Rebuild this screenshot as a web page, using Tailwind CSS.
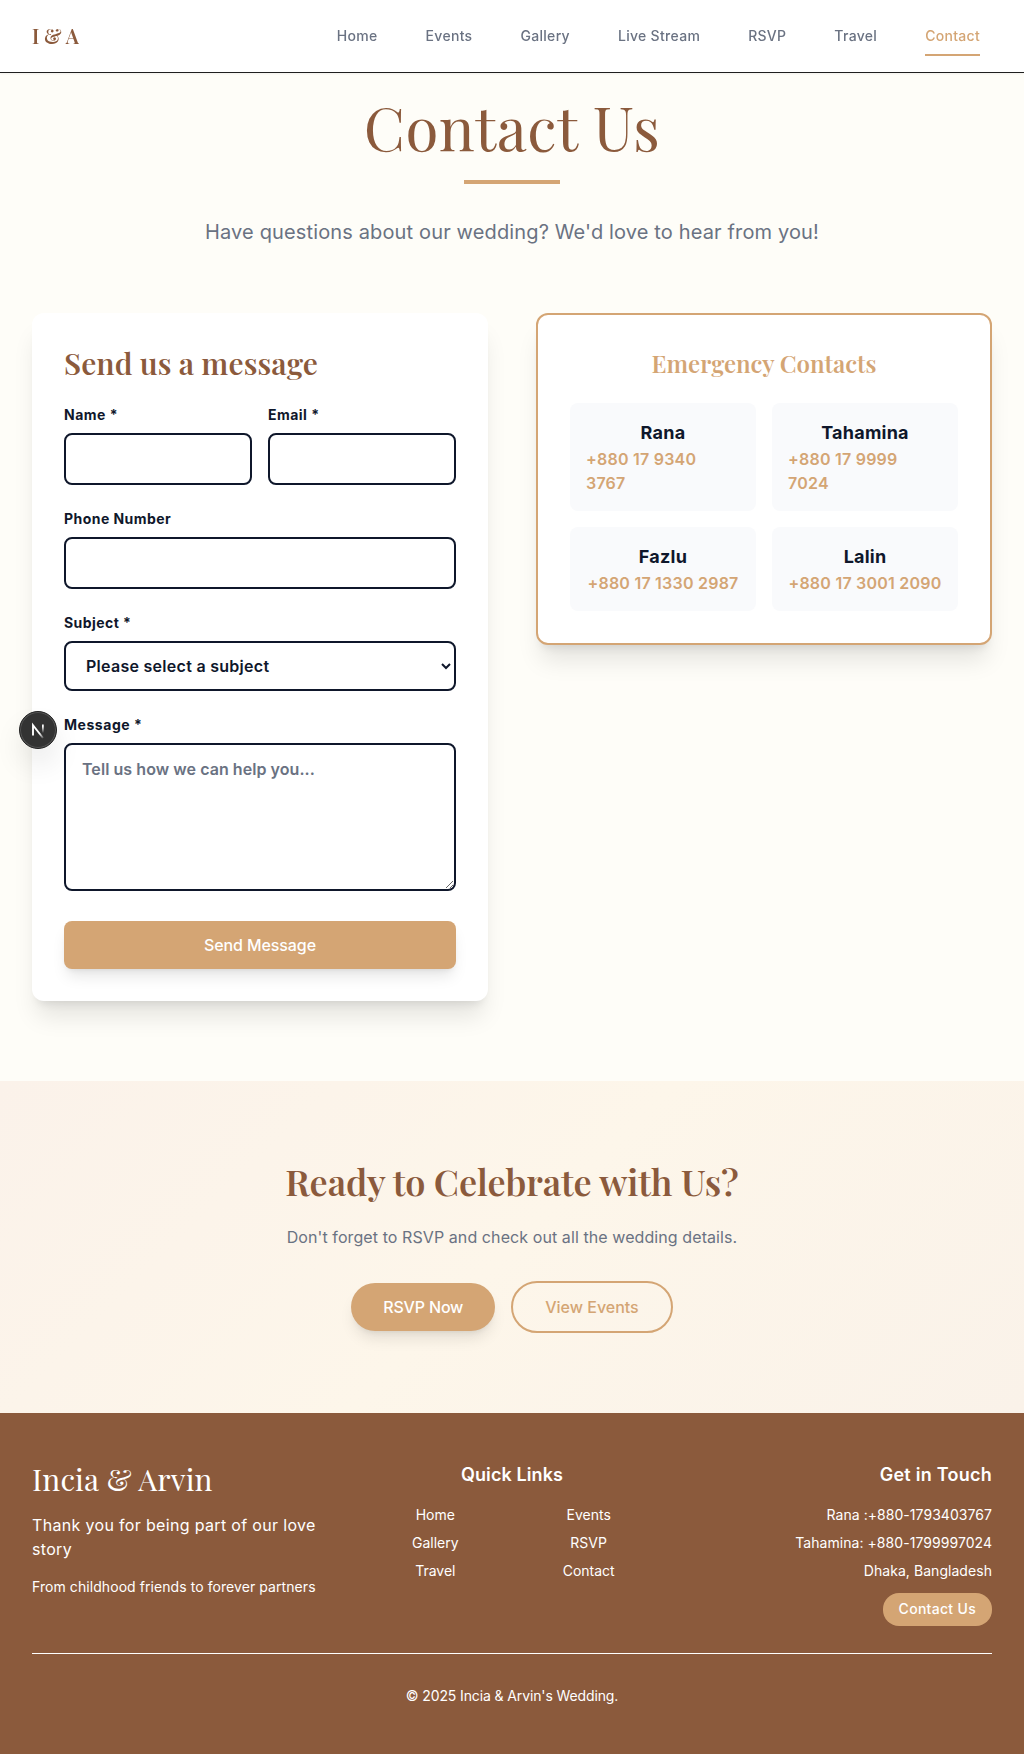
<!DOCTYPE html>
<html lang="en">
<head>
<meta charset="utf-8">
<title>Contact Us</title>
<script src="https://cdn.jsdelivr.net/npm/@tailwindcss/browser@4"></script>
</head>
<body class="bg-[#fefdf8] font-['Inter',sans-serif] text-slate-900">
<header class="fixed inset-x-0 top-0 z-10 flex h-[73px] items-center justify-between border-b border-[#1f1f1f] bg-white px-8 shadow-[0_1px_2px_rgba(0,0,0,0.05)]">
  <a class="font-['Playfair_Display','Liberation_Serif',serif] text-xl font-semibold text-[#8b5a3c]">I &amp; A</a>
  <nav class="mr-3 flex gap-12 text-sm font-medium tracking-[0.3px] text-gray-500">
    <a>Home</a><a>Events</a><a>Gallery</a><a>Live Stream</a><a>RSVP</a><a>Travel</a>
    <a class="relative text-[#d4a574]">Contact<span class="absolute inset-x-0 -bottom-2.5 h-0.5 bg-[#d4a574]"></span></a>
  </nav>
</header>

<main>
  <section class="flex flex-col items-center pt-24">
    <h1 class="h-16 font-['Playfair_Display','Liberation_Serif',serif] text-[60px] leading-[60px] tracking-[0.5px] text-[#8b5a3c]">Contact Us</h1>
    <div class="mt-5 h-1 w-24 bg-[#d4a574]"></div>
    <p class="mt-8 text-xl leading-8 tracking-[0.14px] text-gray-500">Have questions about our wedding? We'd love to hear from you!</p>
  </section>

  <section class="mt-[65px] grid grid-cols-2 items-start gap-12 px-8 pb-20">
    <form class="rounded-xl bg-white p-8 shadow-xl">
      <h2 class="mb-6 font-['Playfair_Display','Liberation_Serif',serif] text-3xl leading-9 font-semibold tracking-[0.1px] text-[#8b5a3c]">Send us a message</h2>
      <div class="flex flex-col gap-6 font-semibold">
        <div class="grid grid-cols-2 gap-4">
          <div><label class="mb-2 block text-sm font-bold tracking-[0.48px]">Name *</label><input class="block h-[52px] w-full rounded-lg border-2 border-slate-900 px-4"></div>
          <div><label class="mb-2 block text-sm font-bold tracking-[0.48px]">Email *</label><input class="block h-[52px] w-full rounded-lg border-2 border-slate-900 px-4"></div>
        </div>
        <div><label class="mb-2 block text-sm font-bold tracking-[0.45px]">Phone Number</label><input class="block h-[52px] w-full rounded-lg border-2 border-slate-900 px-4"></div>
        <div><label class="mb-2 block text-sm font-bold tracking-[0.45px]">Subject *</label><select class="block h-[50px] w-full rounded-lg border-2 border-slate-900 bg-white px-4 tracking-[0.28px]"><option>Please select a subject</option></select></div>
        <div><label class="mb-2 block text-sm font-bold tracking-[0.55px]">Message *</label><textarea class="mb-1.5 block h-[148px] w-full rounded-lg border-2 border-slate-900 px-4 py-3 tracking-[0.06px] placeholder:text-gray-500" placeholder="Tell us how we can help you..."></textarea></div>
        <button type="button" class="h-12 rounded-lg bg-[#d4a574] font-medium tracking-[-0.1px] text-white shadow-lg">Send Message</button>
      </div>
    </form>

    <div class="rounded-xl border-2 border-[#d4a574] bg-white p-8 shadow-xl">
      <h3 class="mb-6 text-center font-['Playfair_Display','Liberation_Serif',serif] text-2xl leading-8 font-semibold text-[#d4a574]">Emergency Contacts</h3>
      <div class="grid grid-cols-2 gap-4 font-semibold tracking-[0.23px] text-[#d4a574]">
        <div class="flex flex-col items-center rounded-lg bg-[#f9fafc] p-4"><h4 class="text-lg font-bold text-slate-900">Rana</h4><a class="w-full">+880 17 9340<br>3767</a></div>
        <div class="flex flex-col items-center rounded-lg bg-[#f9fafc] p-4"><h4 class="text-lg font-bold text-slate-900">Tahamina</h4><a class="w-full">+880 17 9999<br>7024</a></div>
        <div class="flex flex-col items-center rounded-lg bg-[#f9fafc] p-4"><h4 class="text-lg font-bold text-slate-900">Fazlu</h4><a class="whitespace-nowrap">+880 17 1330 2987</a></div>
        <div class="flex flex-col items-center rounded-lg bg-[#f9fafc] p-4"><h4 class="text-lg font-bold text-slate-900">Lalin</h4><a class="whitespace-nowrap">+880 17 3001 2090</a></div>
      </div>
    </div>
  </section>

  <section class="flex h-[332px] flex-col items-center bg-linear-135 from-[#fbf2ea] via-[#fdf6ea] to-[#faf2e9] pt-20">
    <h2 class="font-['Playfair_Display','Liberation_Serif',serif] text-4xl leading-10 font-semibold tracking-[-0.08px] text-[#8b5a3c]">Ready to Celebrate with Us?</h2>
    <p class="mt-6 tracking-[0.085px] text-gray-500">Don't forget to RSVP and check out all the wedding details.</p>
    <div class="mt-8 flex items-center gap-4 font-medium">
      <a class="rounded-3xl bg-[#d4a574] px-8 py-3 tracking-[-0.18px] text-white shadow-lg">RSVP Now</a>
      <a class="rounded-[26px] border-2 border-[#d4a574] px-8 py-3 text-[#d4a574]">View Events</a>
    </div>
  </section>
</main>

<footer class="h-[341px] bg-[#8b5a3c] px-8 pt-12 text-white">
  <div class="grid h-48 grid-cols-3 gap-8">
    <div>
      <h3 class="font-['Playfair_Display','Liberation_Serif',serif] text-3xl leading-9 tracking-[0.15px]">Incia &amp; Arvin</h3>
      <p class="mt-4 tracking-[0.33px]">Thank you for being part of our love story</p>
      <p class="mt-4 text-sm tracking-[0.07px]">From childhood friends to forever partners</p>
    </div>
    <div class="text-center">
      <h4 class="text-lg font-semibold tracking-[0.1px]">Quick Links</h4>
      <div class="mt-4 grid grid-cols-2 gap-2 text-sm"><a>Home</a><a>Events</a><a>Gallery</a><a>RSVP</a><a>Travel</a><a>Contact</a></div>
    </div>
    <div class="flex flex-col items-end text-sm">
      <h4 class="mb-4 text-lg font-semibold tracking-[0.25px]">Get in Touch</h4>
      <div class="flex flex-col items-end gap-2 tracking-[0.05px]"><p>Rana :+880-1793403767</p><p>Tahamina: +880-1799997024</p><p>Dhaka, Bangladesh</p></div>
      <a class="mt-3 rounded-2xl bg-[#d4a574] px-4 pt-1.5 pb-[7px] font-medium tracking-[0.3px]">Contact Us</a>
    </div>
  </div>
  <div class="border-t border-white pt-8 text-center text-sm tracking-[-0.12px]">© 2025 Incia &amp; Arvin's Wedding.</div>
</footer>

<div class="fixed top-[711px] left-[19px] z-20 flex size-[38px] items-center justify-center rounded-full border border-[#222] bg-[#333] shadow-[0_16px_32px_-8px_rgba(0,0,0,0.24)] inset-ring inset-ring-[#555]">
  <svg class="size-9 shrink-0" viewBox="0 0 36 36" fill="none">
    <defs>
      <linearGradient id="diag" x1="13" y1="13" x2="23" y2="26" gradientUnits="userSpaceOnUse"><stop offset=".65" stop-color="#fff"/><stop offset="1" stop-color="#fff" stop-opacity=".2"/></linearGradient>
      <linearGradient id="stem" x1="22" y1="12" x2="22" y2="21" gradientUnits="userSpaceOnUse"><stop offset=".3" stop-color="#fff"/><stop offset="1" stop-color="#fff" stop-opacity="0"/></linearGradient>
    </defs>
    <path d="M13 23.5V13.2L23 26" stroke="url(#diag)" stroke-width="1.9"/><path d="M22.9 12.5v8.5" stroke="url(#stem)" stroke-width="1.7"/>
  </svg>
</div>
</body>
</html>
